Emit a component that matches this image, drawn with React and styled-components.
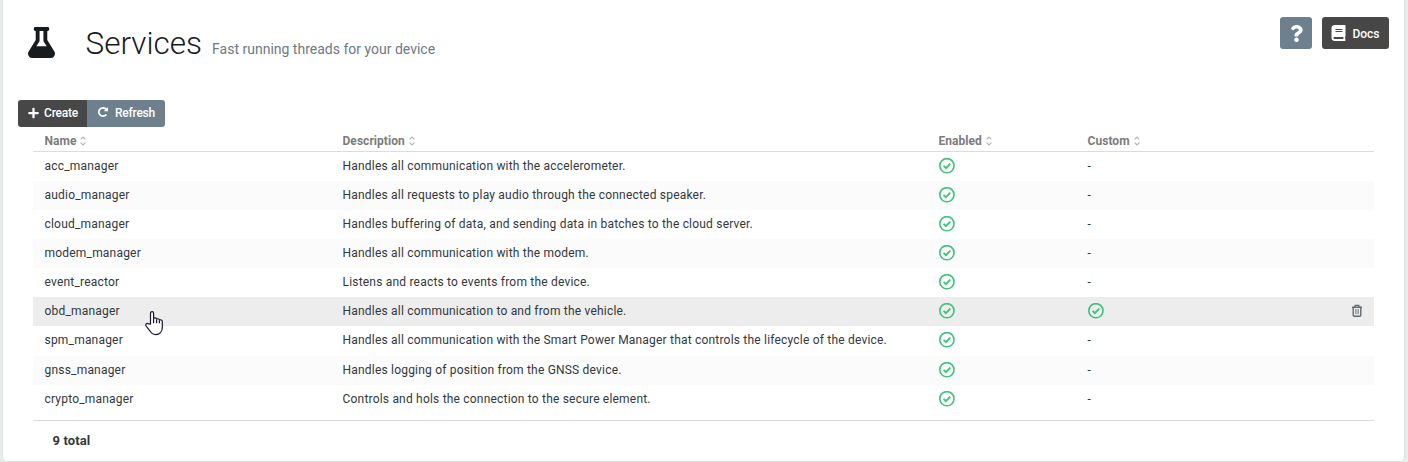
import React from "react";
import styled, { createGlobalStyle, css } from "styled-components";
import { FaFlask, FaPlus, FaQuestion, FaBook } from "react-icons/fa";

const GlobalStyle = createGlobalStyle`
  * { box-sizing: border-box; }
  body {
    margin: 0;
    background: #e9ecec;
    font-family: Roboto, "Liberation Sans", sans-serif;
    color: #33383b;
    overflow: hidden;
  }
`;

const Page = styled.div`
  height: 462px;
  padding: 0 4px 1px 3px;
`;

const Card = styled.main`
  height: 461px;
  background: #fff;
  border-radius: 0 0 4px 4px;
  box-shadow: 0 0 2px rgba(60, 75, 75, 0.16);
`;

const Header = styled.header`
  display: flex;
  align-items: flex-start;
  height: 100px;
  padding: 17px 15px 0 25px;
`;

const Brand = styled.div`
  width: 57.5px;
  padding-top: 10px;
  color: #181b1e;
  svg { display: block; }
`;

const Title = styled.h1`
  flex: 1;
  margin: 8px 0 0;
  font-size: 31.5px;
  line-height: 38px;
  font-weight: 300;
  color: #181b1e;
`;

const Subtitle = styled.small`
  margin-left: 10px;
  font-size: 14px;
  font-weight: 400;
  color: #6d7a84;
`;

const Actions = styled.div`
  display: flex;
  gap: 10px;
`;

const Button = styled.button`
  display: inline-flex;
  align-items: center;
  justify-content: center;
  gap: ${(p) => p.$gap || 5}px;
  width: ${(p) => p.$width}px;
  height: ${(p) => p.$height || 27}px;
  padding: 0;
  border: 0;
  border-radius: ${(p) => p.$radius || "3px"};
  background: ${(p) => (p.$tone === "slate" ? "#6e808d" : "#474747")};
  color: #fff;
  font: 500 12px Roboto, sans-serif;
  letter-spacing: ${(p) => p.$tracking || 0}px;
`;

const ButtonLabel = styled.span`
  padding-top: 2px;
`;

const Toolbar = styled.div`
  display: flex;
  padding-left: 15px;
  ${Button} { padding: 0 0 2px 1px; }
`;

const Table = styled.section`
  width: 1341px;
  margin-left: 30px;
`;

const columns = css`
  display: grid;
  grid-template-columns: 2fr 4fr 1fr 1fr 1fr;
  align-items: center;
`;

const HeadRow = styled.div`
  ${columns}
  height: 24.5px;
  border-bottom: 1px solid #dcdcdc;
  font-size: 12px;
  font-weight: 700;
  color: #7c7c7c;
`;

const HeadCell = styled.div`
  display: flex;
  align-items: center;
  gap: 4px;
  padding: 5px 0 0 11.5px;
  letter-spacing: 0.05px;
`;

const Body = styled.div`
  height: 269px;
  border-bottom: 1px solid #dcdcdc;
`;

const Row = styled.div`
  ${columns}
  height: 29.17px;
  padding-bottom: 1.1px;
  background: ${(p) => (p.$active ? "#ededed" : p.$striped ? "#fbfbfb" : "#fff")};
`;

const Cell = styled.div`
  padding-left: 11.5px;
  font-size: 12px;
  line-height: 16px;
  letter-spacing: 0.2px;
  white-space: nowrap;
  svg { display: block; }
`;

const EndCell = styled.div`
  display: flex;
  justify-content: flex-end;
  padding-right: 11px;
`;

const Total = styled.div`
  padding: 12px 0 0 19.5px;
  font-size: 13px;
  line-height: 16px;
  font-weight: 700;
  letter-spacing: 0.1px;
`;

const Pointer = styled.svg`
  position: absolute;
  left: 145px;
  top: 310px;
`;

const SortIcon = () => (
  <svg width="6" height="10" viewBox="0 0 6 10" fill="none" stroke="#b4b4b4" strokeWidth="1.2">
    <path d="M.6 3.4 3 1l2.400 2.400M.6 6.600 3 9l2.400-2.400" />
  </svg>
);

const CheckIcon = () => (
  <svg width="16" height="16" viewBox="0 0 16 16" fill="none" stroke="#42c37c">
    <circle cx="7.9" cy="7.7" r="7.1" strokeWidth="1.6" />
    <path d="m4.600 7.900 2.300 2.300 4.400-4.500" strokeWidth="1.900" />
  </svg>
);

const RefreshIcon = () => (
  <svg width="10" height="12" viewBox="0 0 1536 1843" fill="#fff">
    <path d="M1536 128v448q0 26-19 45t-45 19h-448q-42 0-59-40-17-39 14-69l138-138q-148-137-349-137-104 0-198.500 40.500t-163.500 109.500-109.500 163.500-40.500 198.500 40.500 198.500 109.500 163.500 163.500 109.500 198.500 40.500q119 0 225-52t179-147q7-10 23-12 14 0 25 9l137 138q9 8 9.500 20.500t-7.500 22.500q-109 132-264 204.500t-327 72.500q-156 0-298-61t-245-164-164-245-61-298 61-298 164-245 245-164 298-61q147 0 284.500 55.500t244.500 156.500l130-129q29-31 70-14 39 17 39 59z" />
  </svg>
);

const TrashIcon = () => (
  <svg width="12" height="14" viewBox="0 0 12 14" fill="none" stroke="#626a70">
    <path d="M1 3.200h10M4.200 2.700V1.400h3.600v1.300M2.200 3.200v8q0 1 1 1h5.600q1 0 1-1v-8" strokeWidth="1.400" />
    <path d="M4.900 5v5.200M7.100 5v5.200" strokeWidth="1" />
  </svg>
);

const services = [
  ["acc_manager", "Handles all communication with the accelerometer."],
  ["audio_manager", "Handles all requests to play audio through the connected speaker."],
  ["cloud_manager", "Handles buffering of data, and sending data in batches to the cloud server."],
  ["modem_manager", "Handles all communication with the modem."],
  ["event_reactor", "Listens and reacts to events from the device."],
  ["obd_manager", "Handles all communication to and from the vehicle.", true],
  ["spm_manager", "Handles all communication with the Smart Power Manager that controls the lifecycle of the device."],
  ["gnss_manager", "Handles logging of position from the GNSS device."],
  ["crypto_manager", "Controls and hols the connection to the secure element."],
];

export default function App() {
  return (
    <Page>
      <GlobalStyle />
      <Card>
        <Header>
          <Brand><FaFlask size={31} style={{ width: 27 }} /></Brand>
          <Title>Services<Subtitle>Fast running threads for your device</Subtitle></Title>
          <Actions>
            <Button $tone="slate" $width={32} $height={32}><FaQuestion size={17} /></Button>
            <Button $width={67} $height={32} $gap={6}>
              <FaBook size={16} style={{ width: 15 }} />
              <ButtonLabel>Docs</ButtonLabel>
            </Button>
          </Actions>
        </Header>
        <Toolbar>
          <Button $width={69} $radius="3px 0 0 3px" $tracking={-0.25}><FaPlus size={12} style={{ width: 11 }} />Create</Button>
          <Button $tone="slate" $width={78} $radius="0 3px 3px 0" $gap={7} $tracking={-0.25}><RefreshIcon />Refresh</Button>
        </Toolbar>
        <Table>
          <HeadRow>
            {["Name", "Description", "Enabled", "Custom"].map((label) => (
              <HeadCell key={label}>{label}<SortIcon /></HeadCell>
            ))}
          </HeadRow>
          <Body>
            {services.map(([name, description, custom], i) => (
              <Row key={name} $striped={i % 2 === 1} $active={custom}>
                <Cell>{name}</Cell>
                <Cell>{description}</Cell>
                <Cell><CheckIcon /></Cell>
                <Cell>{custom ? <CheckIcon /> : "-"}</Cell>
                <EndCell>{custom && <TrashIcon />}</EndCell>
              </Row>
            ))}
          </Body>
          <Total>9 total</Total>
        </Table>
      </Card>
      <Pointer width="20" height="26" viewBox="0 0 20 26" fill="#fff" stroke="#17152b" strokeWidth="1.200">
        <path d="M5.500 14V3.300C5.500 1 8.600 1 8.600 3.300V9c0-1.700 3-1.500 3 .2v.6c0-1.500 2.800-1.300 2.800.2v.8c0-1.300 2.900-1.200 2.900.6v6.200c0 4-2.600 7-6.600 7-3 0-4.600-1.600-5.900-3.800L1 15.800c-.9-1.700 1.200-3.200 2.600-1.900z" />
        <path d="M8.600 9v4.300M11.600 9.800v3.500M14.400 10.800v2.500" />
      </Pointer>
    </Page>
  );
}
